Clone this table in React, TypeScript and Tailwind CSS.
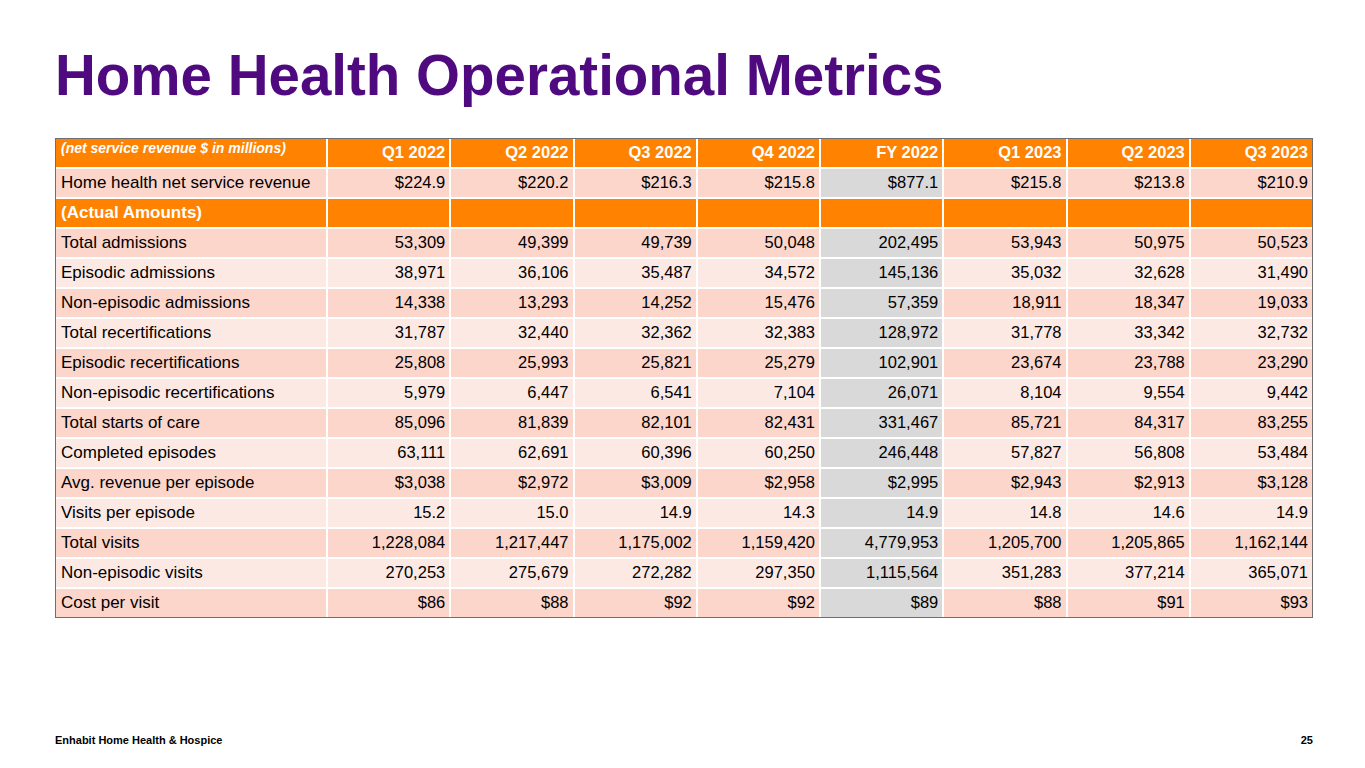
const cols = ["Q1 2022", "Q2 2022", "Q3 2022", "Q4 2022", "FY 2022", "Q1 2023", "Q2 2023", "Q3 2023"]

type Row = { label: string; values: string[]; shade: "dark" | "light" }

const rows: Row[] = [
  { label: "Total admissions", values: ["53,309", "49,399", "49,739", "50,048", "202,495", "53,943", "50,975", "50,523"], shade: "dark" },
  { label: "Episodic admissions", values: ["38,971", "36,106", "35,487", "34,572", "145,136", "35,032", "32,628", "31,490"], shade: "light" },
  { label: "Non-episodic admissions", values: ["14,338", "13,293", "14,252", "15,476", "57,359", "18,911", "18,347", "19,033"], shade: "dark" },
  { label: "Total recertifications", values: ["31,787", "32,440", "32,362", "32,383", "128,972", "31,778", "33,342", "32,732"], shade: "light" },
  { label: "Episodic recertifications", values: ["25,808", "25,993", "25,821", "25,279", "102,901", "23,674", "23,788", "23,290"], shade: "dark" },
  { label: "Non-episodic recertifications", values: ["5,979", "6,447", "6,541", "7,104", "26,071", "8,104", "9,554", "9,442"], shade: "light" },
  { label: "Total starts of care", values: ["85,096", "81,839", "82,101", "82,431", "331,467", "85,721", "84,317", "83,255"], shade: "dark" },
  { label: "Completed episodes", values: ["63,111", "62,691", "60,396", "60,250", "246,448", "57,827", "56,808", "53,484"], shade: "light" },
  { label: "Avg. revenue per episode", values: ["$3,038", "$2,972", "$3,009", "$2,958", "$2,995", "$2,943", "$2,913", "$3,128"], shade: "dark" },
  { label: "Visits per episode", values: ["15.2", "15.0", "14.9", "14.3", "14.9", "14.8", "14.6", "14.9"], shade: "light" },
  { label: "Total visits", values: ["1,228,084", "1,217,447", "1,175,002", "1,159,420", "4,779,953", "1,205,700", "1,205,865", "1,162,144"], shade: "dark" },
  { label: "Non-episodic visits", values: ["270,253", "275,679", "272,282", "297,350", "1,115,564", "351,283", "377,214", "365,071"], shade: "light" },
  { label: "Cost per visit", values: ["$86", "$88", "$92", "$92", "$89", "$88", "$91", "$93"], shade: "dark" },
]

const revenue = ["$224.9", "$220.2", "$216.3", "$215.8", "$877.1", "$215.8", "$213.8", "$210.9"]

function DataRow({ label, values, shade }: Row) {
  const bg = shade === "dark" ? "bg-[#fcd5cb]" : "bg-[#fde9e4]"
  return (
    <>
      <div className={`${bg} flex items-center px-[5px] text-[17px]`}>{label}</div>
      {values.map((v, i) => (
        <div
          key={i}
          className={`${i === 4 ? "bg-[#d9d9d9]" : bg} flex items-center justify-end px-[4px] text-[16.5px]`}
        >
          {v}
        </div>
      ))}
    </>
  )
}

export default function App() {
  return (
    <div
      className="w-[1365px] h-[768px] bg-white flex flex-col text-black"
      style={{ fontFamily: '"Liberation Sans", Arial, sans-serif' }}
    >
      {/* Title */}
      <h1 className="ml-[55px] mt-[48px] text-[56.5px] leading-none font-bold text-[#4f0a80]">
        Home Health Operational Metrics
      </h1>

      {/* Table */}
      <div className="ml-[55px] mt-[33px] w-[1258px] border border-[#6f6f6f] bg-white">
        <div className="grid grid-cols-[270px_repeat(8,1fr)] auto-rows-[28px] gap-[2px]">
          <div className="bg-[#ff8200] px-[5px] pt-[1px] text-[14px] italic font-bold text-white leading-tight">
            (net service revenue $ in millions)
          </div>
          {cols.map((c) => (
            <div key={c} className="bg-[#ff8200] flex items-center justify-end px-[4px] text-[16.5px] font-bold text-white">
              {c}
            </div>
          ))}

          <DataRow label="Home health net service revenue" values={revenue} shade="dark" />

          <div className="bg-[#ff8200] flex items-center px-[5px] text-[17px] font-bold text-white">(Actual Amounts)</div>
          {cols.map((c) => (
            <div key={c} className="bg-[#ff8200]" />
          ))}

          {rows.map((r) => (
            <DataRow key={r.label} {...r} />
          ))}
        </div>
      </div>

      {/* Footer */}
      <div className="mt-auto mb-[20px] mx-[52px] flex justify-between text-[11px] font-bold">
        <span className="ml-[3px]">Enhabit Home Health &amp; Hospice</span>
        <span>25</span>
      </div>
    </div>
  )
}
